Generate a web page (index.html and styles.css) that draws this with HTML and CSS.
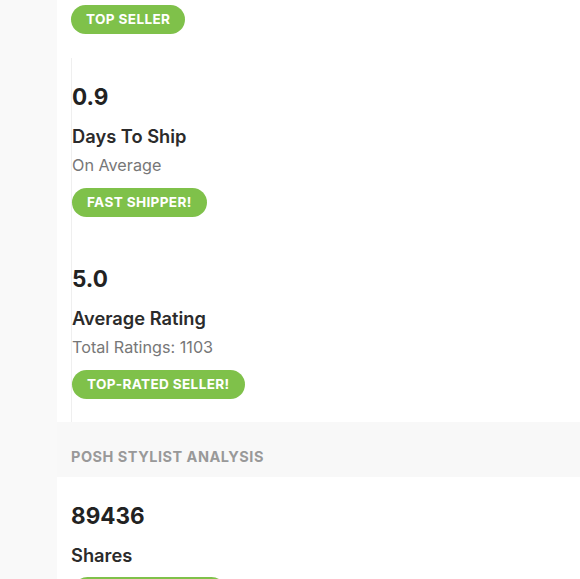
FILE: index.html
```html
<!DOCTYPE html>
<html>
<head>
<meta charset="utf-8">
<link rel="stylesheet" href="styles.css">
</head>
<body>
<div class="page">
  <div class="top-badge">
    <span class="pill">Top Seller</span>
  </div>
  <div class="stats">
    <div class="stat">
      <div class="stat-value">0.9</div>
      <div class="stat-label">Days To Ship</div>
      <div class="stat-sub">On Average</div>
      <span class="pill">Fast Shipper!</span>
    </div>
    <div class="stat">
      <div class="stat-value">5.0</div>
      <div class="stat-label">Average Rating</div>
      <div class="stat-sub">Total Ratings: 1103</div>
      <span class="pill">Top-Rated Seller!</span>
    </div>
  </div>
  <div class="section-header">Posh Stylist Analysis</div>
  <div class="stat stat-plain">
    <div class="stat-value">89436</div>
    <div class="stat-label">Shares</div>
    <span class="pill pill-cut"></span>
  </div>
</div>
</body>
</html>
```

FILE: styles.css
```css
html, body {
  margin: 0;
  padding: 0;
}
body {
  background: #f9f9f9;
  font-family: Inter, "Open Sans", sans-serif;
  color: #2b2b2b;
  height: 579px;
  overflow: hidden;
}
.page {
  margin-left: 57px;
  background: #fff;
  min-height: 579px;
}
.top-badge {
  padding: 5px 0 24px 14px;
}
.pill {
  display: inline-block;
  height: 29px;
  line-height: 29px;
  padding: 0 15px;
  border-radius: 15px;
  background: #7fc14a;
  color: #fff;
  font-size: 13.6px;
  font-weight: 700;
  letter-spacing: 0.35px;
  text-transform: uppercase;
  white-space: nowrap;
  vertical-align: top;
}
.stats {
  margin-left: 14px;
  border-left: 1px solid #efefef;
}
.stat {
  padding: 24px 0 23px 0;
}
.stat-plain {
  padding-left: 14px;
}
.stat-value {
  font-size: 22.5px;
  line-height: 30px;
  font-weight: 700;
  color: #222;
}
.stat-label {
  margin-top: 12px;
  font-size: 18.3px;
  line-height: 24px;
  font-weight: 600;
  color: #2b2b2b;
}
.stat-sub {
  margin-top: 6px;
  font-size: 16.2px;
  line-height: 22px;
  color: #777;
}
.stat .pill {
  margin-top: 12px;
}
.stat-plain .pill-cut {
  margin-top: 10px;
  margin-left: 2px;
  width: 153px;
  padding: 0;
}
.section-header {
  height: 55px;
  line-height: 70px;
  padding-left: 14px;
  background: #f8f8f8;
  color: #999;
  font-size: 14.5px;
  font-weight: 700;
  letter-spacing: 0.5px;
  text-transform: uppercase;
}
```
